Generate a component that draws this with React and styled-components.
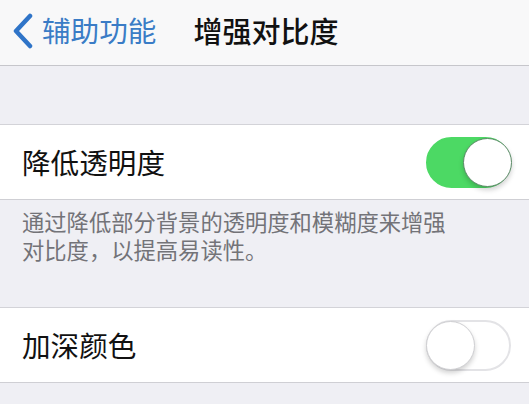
import styled, { createGlobalStyle } from "styled-components";

const GlobalStyle = createGlobalStyle`
  html, body {
    margin: 0;
    padding: 0;
    background: #efeff4;
  }
  body {
    font-family: "Noto Sans CJK SC", "Noto Sans", sans-serif;
  }
`;

const Screen = styled.div`
  width: 529px;
  height: 404px;
  overflow: hidden;
  background: #efeff4;
`;

const NavBar = styled.div`
  display: flex;
  align-items: center;
  height: 66px;
  background: #f8f8f9;
  border-bottom: 1px solid #c6c6cb;
  box-sizing: border-box;
  padding: 0 0 4px 12px;
`;

const Back = styled.div`
  display: flex;
  align-items: center;
  gap: 8px;
  color: #3a7cc6;
  font-size: 28.6px;
  line-height: 1;
`;

const Title = styled.div`
  margin-left: 37px;
  font-size: 29px;
  font-weight: 500;
  color: #111;
  line-height: 1;
`;

const Spacer = styled.div`
  height: ${(p) => p.h}px;
  border-bottom: 1px solid #d3d3d8;
`;

const Row = styled.div`
  display: flex;
  align-items: center;
  justify-content: space-between;
  height: 75px;
  background: #fff;
  border-bottom: 1px solid #cfcfd4;
  box-sizing: border-box;
  padding: 0 18px 0 22px;
`;

const Label = styled.div`
  font-size: 28.6px;
  color: #111;
  line-height: 1;
`;

const Footer = styled.div`
  padding: 7px 22px 44px;
  font-size: 22.3px;
  line-height: 28px;
  color: #737378;
  white-space: nowrap;
  border-bottom: 1px solid #d3d3d8;
`;

const Track = styled.div`
  position: relative;
  width: 85px;
  height: 51px;
  border-radius: 26px;
  box-sizing: border-box;
  background: ${(p) => (p.on ? "#4cd964" : "#fff")};
  border: 2px solid ${(p) => (p.on ? "#4cd964" : "#e3e3e6")};
`;

const Knob = styled.div`
  position: absolute;
  top: -1px;
  left: ${(p) => (p.on ? "35px" : "-2px")};
  width: 49px;
  height: 49px;
  border-radius: 50%;
  background: #fff;
  box-sizing: border-box;
  border: 1.5px solid ${(p) => (p.on ? "#5a8a66" : "#cfcfd2")};
  box-shadow: 0 3px 5px rgba(0, 0, 0, 0.18);
`;

const Switch = ({ on }) => (
  <Track on={on ? 1 : 0}>
    <Knob on={on ? 1 : 0} />
  </Track>
);

const Chevron = () => (
  <svg width="22" height="36" viewBox="0 0 22 36">
    <path
      d="M18 3 L4 18 L18 33"
      fill="none"
      stroke="#2f74c8"
      strokeWidth="4.5"
      strokeLinecap="round"
      strokeLinejoin="round"
    />
  </svg>
);

export default function App() {
  return (
    <Screen>
      <GlobalStyle />
      <NavBar>
        <Back>
          <Chevron />
          辅助功能
        </Back>
        <Title>增强对比度</Title>
      </NavBar>
      <Spacer h={58} />
      <Row>
        <Label>降低透明度</Label>
        <Switch on />
      </Row>
      <Footer>
        通过降低部分背景的透明度和模糊度来增强
        <br />
        对比度，以提高易读性。
      </Footer>
      <Row>
        <Label>加深颜色</Label>
        <Switch />
      </Row>
    </Screen>
  );
}
